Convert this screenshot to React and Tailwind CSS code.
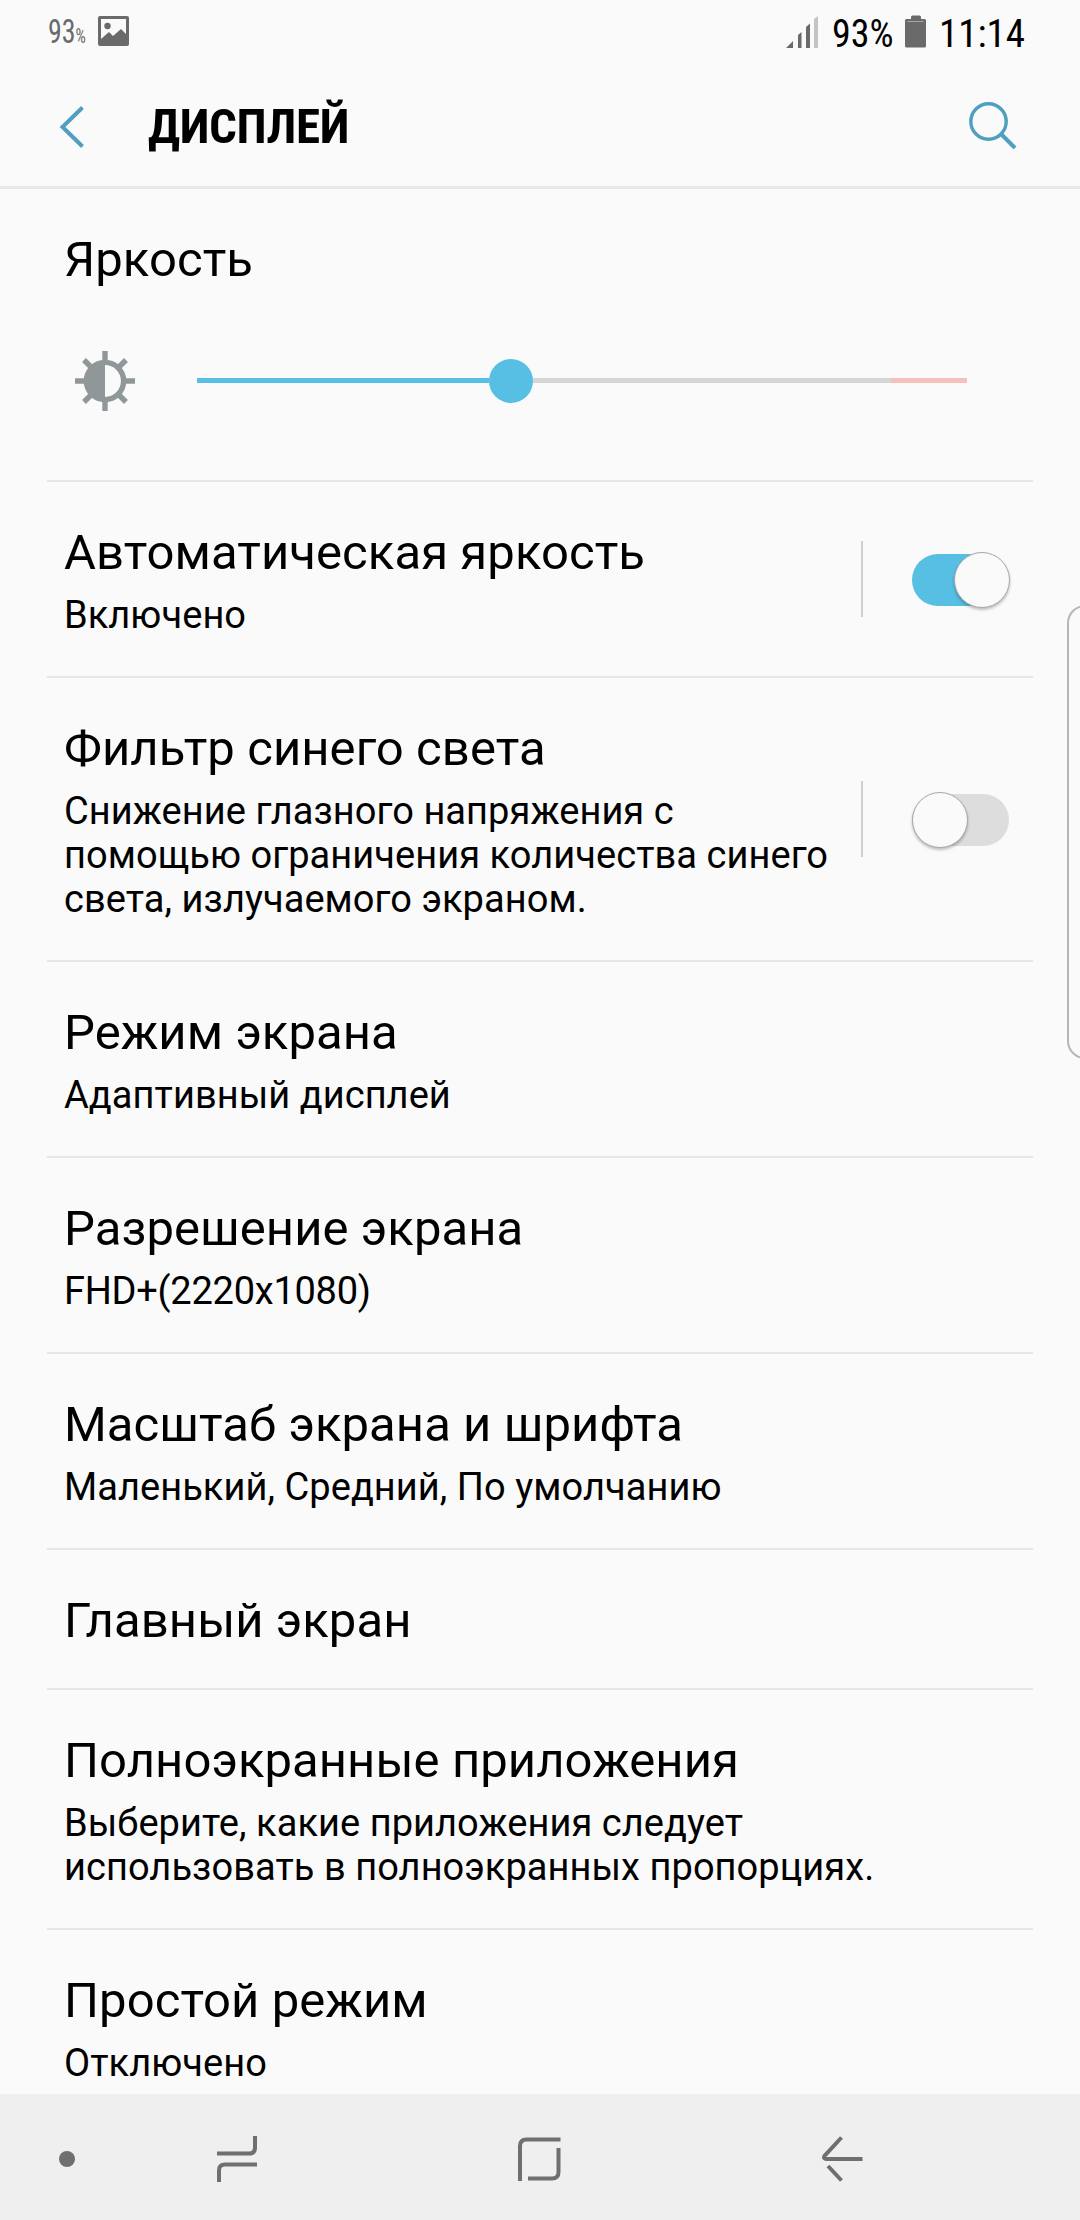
import React, { useState } from "react";

const ITEMS = [
  {
    id: "auto",
    title: "Автоматическая яркость",
    summary: "Включено",
    toggle: true,
  },
  {
    id: "blue",
    title: "Фильтр синего света",
    summary:
      "Снижение глазного напряжения с помощью ограничения количества синего света, излучаемого экраном.",
    toggle: true,
  },
  { id: "mode", title: "Режим экрана", summary: "Адаптивный дисплей" },
  {
    id: "resolution",
    title: "Разрешение экрана",
    summary: "FHD+(2220x1080)",
    tight: true,
  },
  {
    id: "zoom",
    title: "Масштаб экрана и шрифта",
    summary: "Маленький, Средний, По умолчанию",
  },
  { id: "home", title: "Главный экран" },
  {
    id: "fullscreen",
    title: "Полноэкранные приложения",
    summary:
      "Выберите, какие приложения следует использовать в полноэкранных пропорциях.",
  },
  { id: "easy", title: "Простой режим", summary: "Отключено" },
];

function StatusBar() {
  return (
    <div className="flex h-16 shrink-0 items-start justify-between pl-12 pr-[57px]">
      <div className="flex items-start text-[#6a6a6a]">
        <div className="w-[50px] pt-[11px]">
          <div className="flex origin-left scale-x-[0.82] items-baseline whitespace-nowrap">
            <span className="text-[34px] leading-[40px] font-stretch-[75%]">93</span>
            <span className="text-[20px] leading-[40px] font-stretch-[75%]">%</span>
          </div>
        </div>
        <svg className="mt-4" width="31" height="30" viewBox="0 0 31 30">
          <path
            fill="#6a6a6a"
            fillRule="evenodd"
            d="M2 0H29Q31 0 31 2V28Q31 30 29 30H2Q0 30 0 28V2Q0 0 2 0ZM3 3V23L11 16L15 20L23 13L28 18V3Z"
          />
          <circle cx="9.5" cy="10" r="3.2" fill="#6a6a6a" />
        </svg>
      </div>
      <div className="flex items-start">
        <svg className="mt-4" width="32" height="32" viewBox="0 0 32 32">
          <path fill="#6a6a6a" d="M0 32L7 25V32ZM12 19L15.5 16V32H12ZM20 11L24 7.5V32H20Z" />
          <path fill="#c4c4c4" d="M28 3L32 0V32H28Z" />
        </svg>
        <span className="ml-[14px] w-[73px] whitespace-nowrap pt-[11px] text-[38px] leading-[46px] font-stretch-[75%]">
          93%
        </span>
        <svg className="mt-[15px]" width="21" height="33" viewBox="0 0 21 33">
          <path
            fill="#6a6a6a"
            d="M6 4V2Q6 .5 7.5 .5H14.500Q16 .5 16 2V4H19.500Q21 4 21 5.500V31Q21 32.500 19.500 32.500H1.500Q0 32.500 0 31V5.500Q0 4 1.500 4Z"
          />
          <path stroke="#a5a5a5" d="M2.500 6.500H18.500" />
        </svg>
        <span className="ml-[13px] w-[84px] whitespace-nowrap pt-[11px] text-[39px] leading-[46px] font-stretch-[75%]">
          11:14
        </span>
      </div>
    </div>
  );
}

function Header() {
  return (
    <header className="flex h-[125px] shrink-0 items-center border-b-[3px] border-[#e8e8e8] pl-[59px] pr-[63px]">
      <svg className="mt-[3px]" width="26" height="42" viewBox="0 0 26 42" fill="none" stroke="#4f9fbf" strokeWidth="4">
        <path d="M23.500 1.500L3.500 21L23.500 40.500" />
      </svg>
      <h1 className="ml-[63px] mt-1 grow whitespace-nowrap text-[49px] font-bold leading-[58px] tracking-[-0.4px] font-stretch-[75%]">
        ДИСПЛЕЙ
      </h1>
      <svg width="48" height="48" viewBox="0 0 48 48" fill="none" stroke="#4f9fbf">
        <circle cx="19.500" cy="20.500" r="17.700" strokeWidth="3.400" />
        <path d="M32 33L46 47" strokeWidth="4" />
      </svg>
    </header>
  );
}

function BrightnessIcon() {
  return (
    <svg width="60" height="60" viewBox="-30 -30 60 60">
      <g stroke="#909798" strokeWidth="5.400">
        <path d="M0 -30V-19M0 30V19M-30 0H-19M30 0H19M-21 -21L-13 -13M21 -21L13 -13M-21 21L-13 13M21 21L13 13" />
        <circle r="18.600" fill="none" />
      </g>
      <path d="M0 -18A18 18 0 0 0 0 18Z" fill="#909798" />
    </svg>
  );
}

function Brightness() {
  return (
    <section className="mx-[47px] h-[293px] shrink-0 border-b-2 border-[#e6e6e6] pl-[17px] pt-[42px]">
      <h2 className="text-[49px] leading-[58px] tracking-[0.08px]">Яркость</h2>
      <div className="mt-[61px] flex h-[62px] items-center pl-[11px]">
        <BrightnessIcon />
        <div className="-mt-px ml-[62px] flex items-center">
          <div className="h-[5px] w-[292px] bg-[#57bfe3]" />
          <div className="size-[44px] rounded-full bg-[#57bfe3]" />
          <div className="h-[5px] w-[358px] bg-[#d6d6d6]" />
          <div className="h-[5px] w-[76px] bg-[#f5bfbb]" />
        </div>
      </div>
    </section>
  );
}

function Switch({ on, onChange }) {
  return (
    <button
      type="button"
      role="switch"
      aria-checked={on}
      onClick={onChange}
      className={`mt-[2px] flex h-[52px] w-[97px] items-center rounded-full ${
        on ? "justify-end bg-[#57bfe3]" : "justify-start bg-[#dddddd]"
      }`}
    >
      <span
        className={`size-14 shrink-0 rounded-full border border-[#a8a8a8] bg-[#fafafa] shadow-[0_2px_3px_rgba(0,0,0,0.25)] ${
          on ? "-mr-px" : ""
        }`}
      />
    </button>
  );
}

function SettingRow({ item, on, onToggle }) {
  return (
    <li className="mx-[47px] flex shrink-0 items-center border-b-2 border-[#e6e6e6] pb-[39px] pl-[17px] pt-[42px]">
      <div className={item.toggle ? "w-[780px]" : "w-[880px]"}>
        <h2 className="-mb-px text-[49px] leading-[58px] tracking-[0.08px]">{item.title}</h2>
        {item.summary && (
          <p
            className={`mt-3 text-[38px] leading-[44px] ${
              item.tight ? "tracking-[-0.25px]" : "tracking-[0.06px]"
            }`}
          >
            {item.summary}
          </p>
        )}
      </div>
      {item.toggle && (
        <div className="-mb-4 -mt-[19px] flex items-center">
          <div className="ml-[17px] mr-[49px] h-[76px] w-[2px] bg-[#d0d0d0]" />
          <Switch on={on} onChange={onToggle} />
        </div>
      )}
    </li>
  );
}

function NavBar() {
  return (
    <nav className="flex h-[126px] shrink-0 items-center bg-[#efefef] pl-[59px] pt-1">
      <div className="size-4 rounded-full bg-[#6f6f6f]" />
      <svg className="ml-[142px]" width="40" height="46" viewBox="0 0 40 46" fill="none" stroke="#6f6f6f" strokeWidth="4">
        <path d="M0 17.500H32Q38 17.500 38 11.500V0M40 28.500H8Q2 28.500 2 34.500V46" />
      </svg>
      <svg className="ml-[261px]" width="43" height="44" viewBox="0 0 43 44" fill="none" stroke="#6f6f6f" strokeWidth="4">
        <path d="M2 44V9Q2 2.500 8.500 2.500H42.500M10 41.500H34Q40.500 41.500 40.500 35V11" />
      </svg>
      <svg className="ml-[261px]" width="41" height="46" viewBox="0 0 41 46" fill="none" stroke="#6f6f6f" strokeWidth="4">
        <path d="M19.500 1.500L2.500 20Q1 23 4.500 23H40.500M6 30L19.500 44.500" />
      </svg>
    </nav>
  );
}

function App() {
  const [enabled, setEnabled] = useState({ auto: true, blue: false });

  const toggle = (id) => {
    setEnabled({ ...enabled, [id]: !enabled[id] });
  };

  return (
    <div className="relative flex h-[2220px] w-[1080px] flex-col overflow-hidden bg-[#fafafa] font-[Roboto,sans-serif] text-black">
      <StatusBar />
      <Header />
      <main className="flex min-h-0 grow flex-col overflow-hidden">
        <Brightness />
        <ul className="flex flex-col">
          {ITEMS.map((item) => (
            <SettingRow
              key={item.id}
              item={item}
              on={enabled[item.id]}
              onToggle={() => toggle(item.id)}
            />
          ))}
        </ul>
      </main>
      <NavBar />
      {/* Edge panel handle */}
      <div className="absolute -right-2 top-[605px] h-[454px] w-[21px] rounded-l-[18px] border-2 border-[#b6b6b6]" />
    </div>
  );
}

export default App;
